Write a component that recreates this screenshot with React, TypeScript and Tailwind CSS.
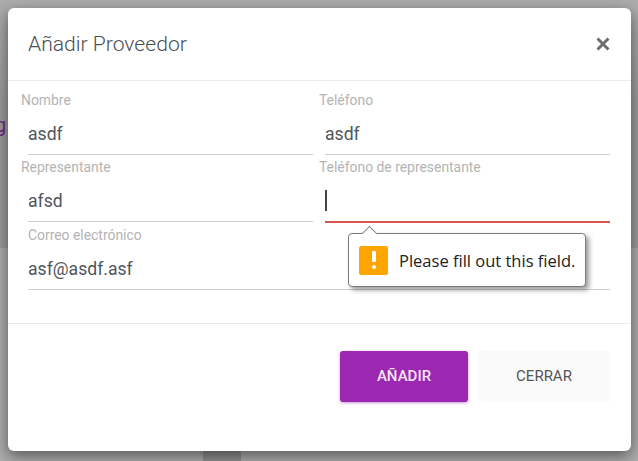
function Field({ label, value, labelClass, underline = "h-px bg-[#cfcfcf]", caret }: { label: string; value?: string; labelClass: string; underline?: string; caret?: boolean }) {
  return (
    <div className="flex flex-col">
      <div className={"h-[25px] text-[13.9px] leading-[25px] text-[#b4b4b4] " + labelClass}>{label}</div>
      <div className="flex h-[41px] items-center text-[17.6px] text-[#50555b]">
        {value && <span className="relative top-px">{value}</span>}
        {caret && <span className="h-[21px] w-[2px] bg-[#444]" />}
      </div>
      <div className={underline} />
    </div>
  );
}

export default function App() {
  return (
    <div className="relative h-[461px] w-[638px] overflow-hidden bg-[#adadad] font-['Roboto',sans-serif]">
      <div className="absolute left-0 top-0 h-[248px] w-full bg-linear-to-b from-[#adadad] to-[#9c9c9c] to-[40%]" />
      <span className="absolute left-[-5px] top-[110px] text-[20px] text-[#6a2a80]">g</span>
      <div className="absolute bottom-0 left-[203px] h-[10px] w-[38px] bg-[#8f8f8f]" />
      <div className="absolute left-[8px] top-[8px] flex h-[443px] w-[623px] flex-col rounded-[6px] bg-white shadow-[0_5px_15px_rgba(0,0,0,0.5)]">
        <header className="flex h-[73px] shrink-0 items-center justify-between border-b border-[#e9ecef] pl-[20px] pr-[21px]">
          <h1 className="text-[21.1px] font-light text-[#4a4f55]">Añadir Proveedor</h1>
          <svg width="14" height="14" viewBox="0 0 14 14" className="text-[#6e6e6e]">
            <path d="M1.5 1.5 12.5 12.5M12.5 1.5 1.5 12.5" stroke="currentColor" strokeWidth="3" />
          </svg>
        </header>
        <div className="grid h-[242px] shrink-0 grid-cols-[285px_285px] content-start gap-x-[12px] pl-[20px] pt-[7px]">
          <Field label="Nombre" value="asdf" labelClass="-ml-[7px]" />
          <Field label="Teléfono" value="asdf" labelClass="-ml-[6px]" />
          <Field label="Representante" value="afsd" labelClass="-ml-[7px]" />
          <Field label="Teléfono de representante" labelClass="-ml-[6px]" underline="h-[2px] bg-[#d9534f]" caret />
          <div className="col-span-2">
            <Field label="Correo electrónico" value="asf@asdf.asf" labelClass="" />
          </div>
        </div>
        <footer className="flex flex-1 items-start justify-end gap-[10px] border-t border-[#e9ecef] pr-[21px] pt-[27px]">
          <button className="h-[51px] w-[128px] rounded-[3px] bg-[#9c27b0] text-[15px] font-medium text-[#f4e6f7] shadow-[0_1px_3px_rgba(156,39,176,0.5)]">AÑADIR</button>
          <button className="h-[51px] w-[132px] rounded-[3px] bg-[#fafafa] text-[15px] text-[#555]">CERRAR</button>
        </footer>
      </div>
      <div className="absolute left-[348px] top-[233px] flex h-[54px] w-[238px] items-center gap-[11px] rounded-[4px] border border-[#7a7a7a] bg-white pl-[10px] shadow-[3px_3px_5px_rgba(0,0,0,0.4)]">
        <div className="absolute left-[15px] top-[-6px] h-[11px] w-[11px] rotate-45 border-l border-t border-[#8a8a8a] bg-white" />
        <div className="flex h-[29px] w-[29px] shrink-0 flex-col items-center justify-center gap-[3px] rounded-[2px] bg-[#ffa500]">
          <span className="h-[11px] w-[4px] rounded-[1px] bg-white" />
          <span className="h-[4px] w-[4px] rounded-full bg-white" />
        </div>
        <span className="relative top-px whitespace-nowrap font-['Open_Sans',sans-serif] text-[16.5px] text-[#222]">Please fill out this field.</span>
      </div>
    </div>
  );
}
